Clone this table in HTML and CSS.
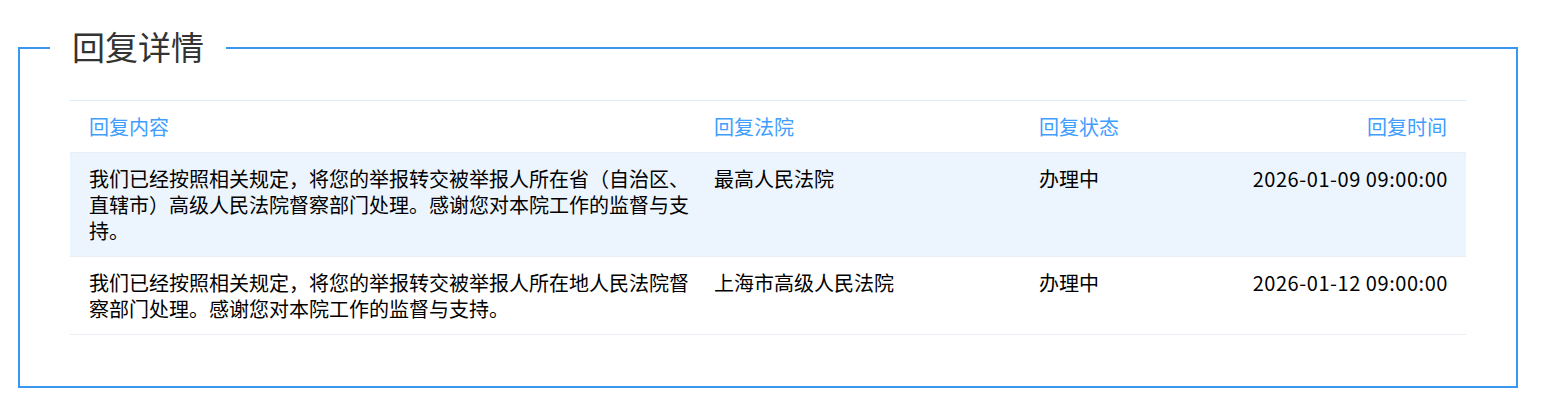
FILE: index.html
```html
<!DOCTYPE html>
<html lang="zh-CN">
<head>
<meta charset="utf-8">
<title>回复详情</title>
<link rel="stylesheet" href="styles.css">
</head>
<body>
<div class="page">
  <fieldset class="panel">
    <legend class="panel-title">回复详情</legend>
    <div class="table">
      <div class="row head">
        <div class="cell c1">回复内容</div>
        <div class="cell c2">回复法院</div>
        <div class="cell c3">回复状态</div>
        <div class="cell c4">回复时间</div>
      </div>
      <div class="row body alt">
        <div class="cell c1">我们已经按照相关规定，将您的举报转交被举报人所在省（自治区、直辖市）高级人民法院督察部门处理。感谢您对本院工作的监督与支持。</div>
        <div class="cell c2">最高人民法院</div>
        <div class="cell c3">办理中</div>
        <div class="cell c4 time">2026-01-09 09:00:00</div>
      </div>
      <div class="row body">
        <div class="cell c1">我们已经按照相关规定，将您的举报转交被举报人所在地人民法院督察部门处理。感谢您对本院工作的监督与支持。</div>
        <div class="cell c2">上海市高级人民法院</div>
        <div class="cell c3">办理中</div>
        <div class="cell c4 time">2026-01-12 09:00:00</div>
      </div>
    </div>
  </fieldset>
</div>
</body>
</html>
```

FILE: styles.css
```css
html, body {
  margin: 0;
  padding: 0;
  background: #ffffff;
}

body {
  font-family: "Noto Sans CJK SC", "Noto Sans", sans-serif;
  color: #000;
}

.page {
  padding: 0 24px 0 18px;
}

.panel {
  margin: 28px 0 0 0;
  width: 1500px;
  box-sizing: border-box;
  min-width: 0;
  border: 2px solid #3a97ef;
  padding: 0 50px 51px 50px;
}

.panel-title {
  margin-left: -20px;
  padding: 0 22px 4px 22px;
  font-size: 33px;
  line-height: 36px;
  color: #333333;
  font-weight: 400;
}

.table {
  margin-top: 32px;
  border-top: 1px solid #ddebf9;
}

.row {
  display: grid;
  grid-template-columns: 625px 325px 180px 1fr;
  border-bottom: 1px solid #e9eef5;
}

.row.alt {
  background: #ecf5fd;
}

.cell {
  padding: 13px 19px 12px 19px;
  font-size: 20px;
  line-height: 26px;
}

.cell.c1 {
  padding-right: 0;
}

.cell.c4 {
  text-align: right;
}

.cell.time {
  white-space: nowrap;
  letter-spacing: 0.55px;
  padding-right: 18px;
}

.head .cell {
  color: #409eff;
}
```
